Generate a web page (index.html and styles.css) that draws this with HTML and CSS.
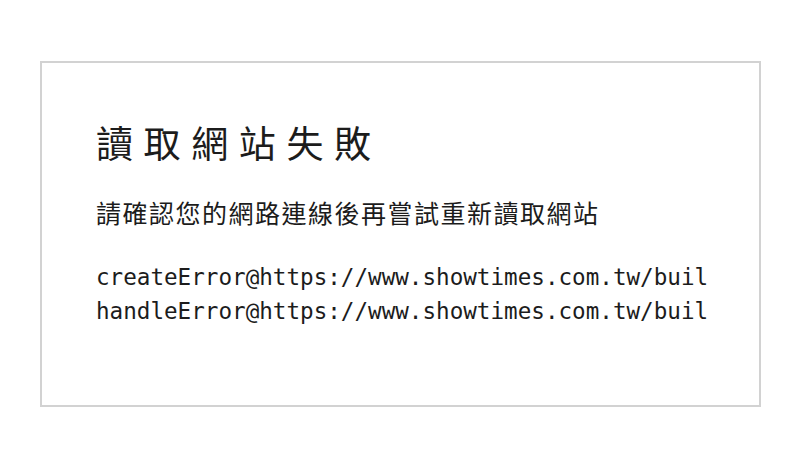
FILE: index.html
```html
<!DOCTYPE html>
<html lang="zh-Hant">
<head>
<meta charset="utf-8">
<link rel="stylesheet" href="styles.css">
</head>
<body>
<div class="page">
  <div class="card">
    <h1 class="title">讀取網站失敗</h1>
    <p class="message">請確認您的網路連線後再嘗試重新讀取網站</p>
    <pre class="trace">createError@https://www.showtimes.com.tw/buil
handleError@https://www.showtimes.com.tw/buil</pre>
  </div>
</div>
</body>
</html>
```
FILE: styles.css
```css
html, body {
  margin: 0;
  padding: 0;
  background: #ffffff;
}
.page {
  width: 800px;
  height: 464px;
  padding: 61px 0 0 40px;
  box-sizing: border-box;
}
.card {
  width: 721px;
  height: 346px;
  box-sizing: border-box;
  border: 2px solid #d2d2d2;
  padding: 55px 52px 0 54px;
  color: #1c1c1c;
  font-family: "Noto Sans CJK TC", "Noto Sans", sans-serif;
}
.title {
  margin: 0;
  font-size: 37px;
  font-weight: 400;
  line-height: 48px;
  letter-spacing: 10.6px;
}
.message {
  margin: 30px 0 0;
  font-size: 25px;
  line-height: 32px;
  letter-spacing: 1.5px;
}
.trace {
  margin: 32px 0 0;
  font-family: "DejaVu Sans Mono", monospace;
  font-size: 22.6px;
  line-height: 34px;
  white-space: pre;
}
```
